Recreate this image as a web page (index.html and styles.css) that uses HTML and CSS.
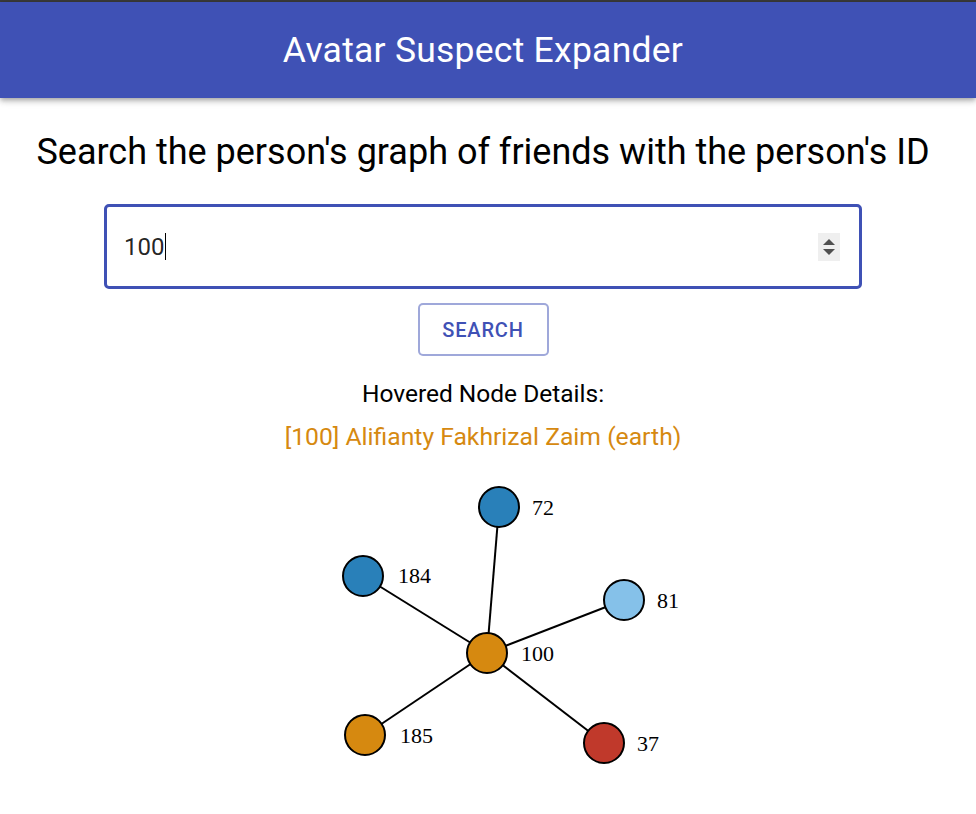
FILE: index.html
```html
<!DOCTYPE html>
<html lang="en">
<head>
<meta charset="utf-8">
<title>Avatar Suspect Expander</title>
<link rel="stylesheet" href="styles.css">
</head>
<body>
<div class="topline"></div>
<header class="appbar">
  <h1 class="appbar-title">Avatar Suspect Expander</h1>
</header>
<main class="page">
  <h2 class="heading">Search the person's graph of friends with the person's ID</h2>
  <div class="field">
    <span class="field-value">100</span><span class="caret"></span>
    <span class="spin">
      <span class="tri tri-up"></span>
      <span class="tri tri-down"></span>
    </span>
  </div>
  <button class="search-btn" type="button">Search</button>
  <p class="details-label">Hovered Node Details:</p>
  <p class="details-value">[100] Alifianty Fakhrizal Zaim (earth)</p>
  <svg class="graph" width="966" height="330" viewBox="0 485 966 330" xmlns="http://www.w3.org/2000/svg">
    <g class="edges">
      <line x1="487" y1="653" x2="499" y2="507"/>
      <line x1="487" y1="653" x2="363" y2="576"/>
      <line x1="487" y1="653" x2="624" y2="600"/>
      <line x1="487" y1="653" x2="365" y2="735"/>
      <line x1="487" y1="653" x2="604" y2="743"/>
    </g>
    <g class="nodes">
      <circle cx="499" cy="507" r="20" fill="#2980b9"/>
      <circle cx="363" cy="576" r="20" fill="#2980b9"/>
      <circle cx="624" cy="600" r="20" fill="#85c1e9"/>
      <circle cx="487" cy="653" r="20" fill="#d68910"/>
      <circle cx="365" cy="735" r="20" fill="#d68910"/>
      <circle cx="604" cy="743" r="20" fill="#c0392b"/>
    </g>
    <g class="labels">
      <text x="532" y="515">72</text>
      <text x="398" y="583">184</text>
      <text x="657" y="608">81</text>
      <text x="521" y="661">100</text>
      <text x="400" y="743">185</text>
      <text x="637" y="751">37</text>
    </g>
  </svg>
</main>
</body>
</html>
```

FILE: styles.css
```css
* { box-sizing: border-box; }
html, body { margin: 0; padding: 0; background: #fff; }
body {
  font-family: Roboto, "Noto Sans", "Liberation Sans", sans-serif;
  color: #000;
  width: 976px;
  overflow: hidden;
}
.topline { height: 2px; background: #3a3a3a; }
.appbar {
  height: 96px;
  background: #3f51b5;
  box-shadow: 0 2px 4px -1px rgba(0,0,0,.2), 0 4px 5px 0 rgba(0,0,0,.14), 0 1px 10px 0 rgba(0,0,0,.12);
  display: flex;
  align-items: center;
  justify-content: center;
  padding-right: 10px;
  position: relative;
  z-index: 1;
}
.appbar-title {
  margin: 0;
  color: #fff;
  font-weight: 400;
  font-size: 35.5px;
  letter-spacing: 0.25px;
  line-height: 40px;
}
.page {
  width: 966px;
  display: flex;
  flex-direction: column;
  align-items: center;
}
.heading {
  margin: 34px 0 0;
  font-weight: 400;
  font-size: 36px;
  line-height: 40px;
}
.field {
  margin-top: 32px;
  width: 758px;
  height: 85px;
  border: 3px solid #3f51b5;
  border-radius: 5px;
  display: flex;
  align-items: center;
  padding: 0 19px 0 17px;
  font-size: 24px;
  color: rgba(0,0,0,.87);
}
.caret { width: 1px; height: 27px; background: #000; margin-left: 1px; }
.spin {
  margin-left: auto;
  width: 22px;
  height: 28px;
  background: #efefef;
  display: flex;
  flex-direction: column;
  align-items: center;
  justify-content: center;
  gap: 4px;
}
.tri { width: 0; height: 0; border-left: 6px solid transparent; border-right: 6px solid transparent; }
.tri-up { border-bottom: 6px solid #505050; }
.tri-down { border-top: 6px solid #505050; }
.search-btn {
  margin-top: 14px;
  width: 131px;
  height: 53px;
  background: #fff;
  border: 2px solid rgba(63,81,181,.5);
  border-radius: 5px;
  color: #3f51b5;
  font-family: Roboto, "Noto Sans", sans-serif;
  font-weight: 500;
  font-size: 20px;
  letter-spacing: 0.8px;
  text-transform: uppercase;
  padding: 0;
}
.details-label {
  margin: 24px 0 0;
  font-size: 24.5px;
  line-height: 28px;
}
.details-value {
  margin: 15px 0 0;
  font-size: 24.7px;
  line-height: 28px;
  color: #d68910;
}
.graph { display: block; margin-top: 34px; }
.edges line { stroke: #000; stroke-width: 2; }
.nodes circle { stroke: #000; stroke-width: 2; }
.labels text { font-family: "Liberation Serif", "Times New Roman", serif; font-size: 22px; fill: #000; }
```
